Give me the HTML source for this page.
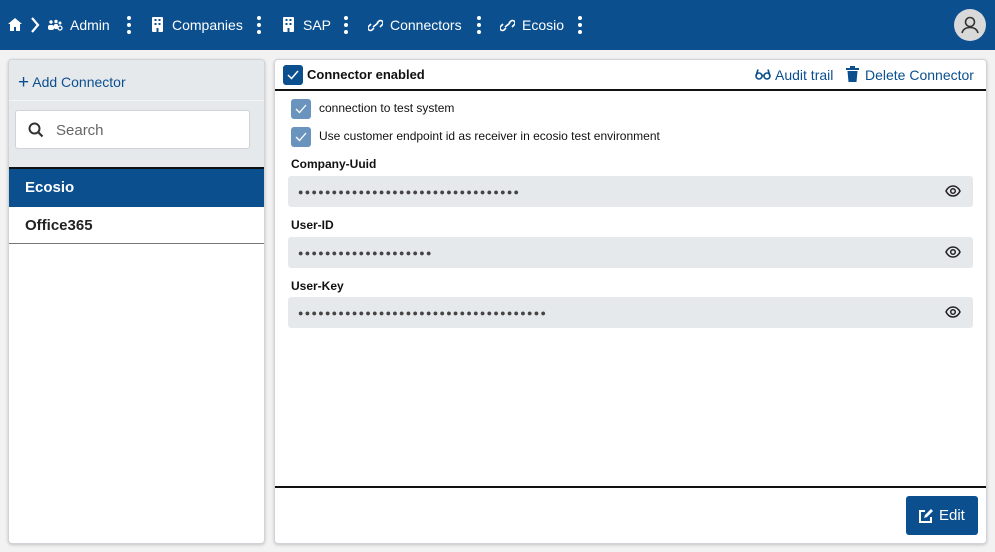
<!DOCTYPE html>
<html><head><style>
*{box-sizing:border-box;margin:0;padding:0}
body{width:995px;height:552px;background:#f2f2f2;font-family:"Liberation Sans",sans-serif;position:relative;overflow:hidden;font-size:14px;color:#111}
.top{position:absolute;left:0;top:0;width:995px;height:50px;background:#0b4f8f;color:#fff}
.top span{position:absolute;top:17px;font-size:14px}
.dots{position:absolute;top:16px;width:4px}
.dots i{display:block;width:4px;height:4px;border-radius:2px;background:#fff;margin-bottom:3px}
.av{position:absolute;left:954px;top:9px;width:32px;height:32px;border-radius:16px;background:#d9d9d9}
.panel{position:absolute;background:#fff;border:1px solid #d0d4d8;border-radius:4px;box-shadow:0 1px 3px rgba(0,0,0,.2)}
.cb{position:absolute;width:20px;height:20px;border-radius:3px;background:#6a93bd}
.lab{position:absolute;left:291px;font-size:12px;font-weight:bold;color:#111}
.inp{position:absolute;left:288px;width:685px;height:31px;background:#e6e9ec;border-radius:3px}
.inp b{position:absolute;left:10px;top:11px;font-size:9px;letter-spacing:1.3px;color:#444;font-weight:normal}
.eye{position:absolute;right:12px;top:8px}
</style></head><body>
<div class="top">
<svg style="position:absolute;left:7px;top:17px" width="16" height="15" viewBox="0 0 16 15"><path d="M8 1L1 7h2v7h4v-4h2v4h4V7h2z" fill="#fff"/></svg>
<svg style="position:absolute;left:30px;top:17px" width="10" height="16" viewBox="0 0 10 16"><path d="M2 1l6 7-6 7" stroke="#fff" stroke-width="2.2" fill="none"/></svg>
<svg style="position:absolute;left:47px;top:19px" width="16" height="12" viewBox="0 0 16 12"><circle cx="4" cy="3" r="1.7" fill="#fff"/><circle cx="9" cy="2.5" r="1.7" fill="#fff"/><circle cx="13" cy="4" r="1.5" fill="#fff"/><rect x="1" y="6" width="6" height="5" rx="2" fill="#fff"/><rect x="7" y="5" width="4" height="5" rx="1.5" fill="#fff"/><circle cx="13" cy="9" r="2" fill="none" stroke="#fff" stroke-width="1.3"/></svg>
<span style="left:70px">Admin</span>
<div class="dots" style="left:127px"><i></i><i></i><i></i></div>
<svg style="position:absolute;left:152px;top:17px" width="11" height="15" viewBox="0 0 11 15"><rect width="11" height="15" rx="1" fill="#fff"/><g fill="#0b4f8f"><rect x="2.5" y="2" width="2" height="2"/><rect x="6.5" y="2" width="2" height="2"/><rect x="2.5" y="6" width="2" height="2"/><rect x="6.5" y="6" width="2" height="2"/><rect x="4.5" y="11" width="2" height="4"/></g></svg>
<span style="left:172px">Companies</span>
<div class="dots" style="left:257px"><i></i><i></i><i></i></div>
<svg style="position:absolute;left:283px;top:17px" width="11" height="15" viewBox="0 0 11 15"><rect width="11" height="15" rx="1" fill="#fff"/><g fill="#0b4f8f"><rect x="2.5" y="2" width="2" height="2"/><rect x="6.5" y="2" width="2" height="2"/><rect x="2.5" y="6" width="2" height="2"/><rect x="6.5" y="6" width="2" height="2"/><rect x="4.5" y="11" width="2" height="4"/></g></svg>
<span style="left:303px">SAP</span>
<div class="dots" style="left:344px"><i></i><i></i><i></i></div>
<svg style="position:absolute;left:368px;top:19px" width="15" height="13" viewBox="0 0 15 13"><path d="M6 9L4 11a2.5 2.5 0 01-3.5-3.5L3 5M9 4l2-2a2.5 2.5 0 013.5 3.5L12 8M5 8l5-4" stroke="#fff" stroke-width="1.6" fill="none"/></svg>
<span style="left:390px">Connectors</span>
<div class="dots" style="left:477px"><i></i><i></i><i></i></div>
<svg style="position:absolute;left:500px;top:19px" width="15" height="13" viewBox="0 0 15 13"><path d="M6 9L4 11a2.5 2.5 0 01-3.5-3.5L3 5M9 4l2-2a2.5 2.5 0 013.5 3.5L12 8M5 8l5-4" stroke="#fff" stroke-width="1.6" fill="none"/></svg>
<span style="left:522px">Ecosio</span>
<div class="dots" style="left:578px"><i></i><i></i><i></i></div>
<div class="av"><svg width="32" height="32" viewBox="0 0 32 32"><circle cx="16" cy="13" r="4.5" fill="none" stroke="#333" stroke-width="1.6"/><path d="M8 24c1-4 4-5.5 8-5.5s7 1.5 8 5.5" fill="none" stroke="#333" stroke-width="1.6"/></svg></div>
</div>

<div class="panel" style="left:8px;top:59px;width:257px;height:485px;overflow:hidden">
<div style="position:absolute;left:0;top:0;width:257px;height:108px;background:#e6e9ec"></div>
<div style="position:absolute;left:9px;top:11px;color:#0b4f8f;font-size:14px"><span style="font-size:19px;position:relative;top:1px">+</span> Add Connector</div>
<div style="position:absolute;left:0;top:40px;width:257px;height:1px;background:#f4f5f6"></div>
<div style="position:absolute;left:6px;top:50px;width:235px;height:39px;background:#fff;border:1px solid #cfd3d7;border-radius:3px">
<svg style="position:absolute;left:12px;top:11px" width="16" height="16" viewBox="0 0 16 16"><circle cx="6.5" cy="6.5" r="5" fill="none" stroke="#333" stroke-width="2"/><path d="M10 10l4.5 4.5" stroke="#333" stroke-width="2.2"/></svg>
<span style="position:absolute;left:40px;top:11px;color:#666;font-size:15px">Search</span></div>
<div style="position:absolute;left:0;top:107px;width:257px;height:2px;background:#111"></div>
<div style="position:absolute;left:0;top:109px;width:257px;height:38px;background:#0b4f8f;color:#fff;font-weight:bold;font-size:15px;padding:10px 16px">Ecosio</div>
<div style="position:absolute;left:0;top:147px;width:257px;height:37px;font-weight:bold;font-size:15px;padding:10px 16px;color:#222;border-bottom:1px solid #777">Office365</div>
</div>

<div class="panel" style="left:274px;top:59px;width:713px;height:485px"></div>
<div style="position:absolute;left:283px;top:65px;width:20px;height:20px;border-radius:3px;background:#0b4f8f"><svg width="20" height="20"><path d="M5 10l3.5 3.5L15 6" stroke="#fff" stroke-width="1.5" fill="none"/></svg></div>
<div style="position:absolute;left:307px;top:67px;font-weight:bold;font-size:13px">Connector enabled</div>
<svg style="position:absolute;left:755px;top:68px" width="16" height="12" viewBox="0 0 16 12"><circle cx="4" cy="8" r="3" fill="none" stroke="#0b4f8f" stroke-width="1.6"/><circle cx="12" cy="8" r="3" fill="none" stroke="#0b4f8f" stroke-width="1.6"/><path d="M7 7.5h2M1 8L3 1.5M15 8L13 1.5" stroke="#0b4f8f" stroke-width="1.6" fill="none"/></svg>
<div style="position:absolute;left:775px;top:67px;color:#0b4f8f;font-size:14px">Audit trail</div>
<svg style="position:absolute;left:846px;top:66px" width="13" height="16" viewBox="0 0 13 16"><rect x="0" y="2" width="13" height="2" fill="#0b4f8f"/><rect x="4" y="0" width="5" height="2" fill="#0b4f8f"/><path d="M1.5 5h10l-1 11h-8z" fill="#0b4f8f"/></svg>
<div style="position:absolute;left:865px;top:67px;color:#0b4f8f;font-size:14px">Delete Connector</div>
<div style="position:absolute;left:275px;top:89px;width:711px;height:2px;background:#111"></div>

<div class="cb" style="left:291px;top:99px"><svg width="20" height="20"><path d="M5 10l3.5 3.5L15 6" stroke="#fff" stroke-width="1.3" fill="none"/></svg></div>
<div style="position:absolute;left:319px;top:101px;font-size:12px">connection to test system</div>
<div class="cb" style="left:291px;top:127px"><svg width="20" height="20"><path d="M5 10l3.5 3.5L15 6" stroke="#fff" stroke-width="1.3" fill="none"/></svg></div>
<div style="position:absolute;left:319px;top:129px;font-size:12px">Use customer endpoint id as receiver in ecosio test environment</div>

<div class="lab" style="top:157px">Company-Uuid</div>
<div class="inp" style="top:176px"><b>●●●●●●●●●●●●●●●●●●●●●●●●●●●●●●●●●</b><svg class="eye" width="16" height="14" viewBox="0 0 16 14"><path d="M1 7c2-4 5-5 7-5s5 1 7 5c-2 4-5 5-7 5S3 11 1 7z" fill="none" stroke="#222" stroke-width="1.5"/><circle cx="8" cy="7" r="2.3" fill="none" stroke="#222" stroke-width="1.5"/></svg></div>
<div class="lab" style="top:218px">User-ID</div>
<div class="inp" style="top:237px"><b>●●●●●●●●●●●●●●●●●●●●</b><svg class="eye" width="16" height="14" viewBox="0 0 16 14"><path d="M1 7c2-4 5-5 7-5s5 1 7 5c-2 4-5 5-7 5S3 11 1 7z" fill="none" stroke="#222" stroke-width="1.5"/><circle cx="8" cy="7" r="2.3" fill="none" stroke="#222" stroke-width="1.5"/></svg></div>
<div class="lab" style="top:279px">User-Key</div>
<div class="inp" style="top:297px"><b>●●●●●●●●●●●●●●●●●●●●●●●●●●●●●●●●●●●●●</b><svg class="eye" width="16" height="14" viewBox="0 0 16 14"><path d="M1 7c2-4 5-5 7-5s5 1 7 5c-2 4-5 5-7 5S3 11 1 7z" fill="none" stroke="#222" stroke-width="1.5"/><circle cx="8" cy="7" r="2.3" fill="none" stroke="#222" stroke-width="1.5"/></svg></div>

<div style="position:absolute;left:275px;top:486px;width:711px;height:2px;background:#111"></div>
<div style="position:absolute;left:906px;top:496px;width:72px;height:39px;background:#0b4f8f;border-radius:3px;color:#fff;font-size:15px">
<svg style="position:absolute;left:12px;top:12px" width="16" height="16" viewBox="0 0 16 16"><path d="M7 3H2v11h11V9" fill="none" stroke="#fff" stroke-width="2"/><path d="M6 10l1-3 6-6 2 2-6 6z" fill="#fff"/></svg>
<span style="position:absolute;left:33px;top:11px">Edit</span></div>
</body></html>
